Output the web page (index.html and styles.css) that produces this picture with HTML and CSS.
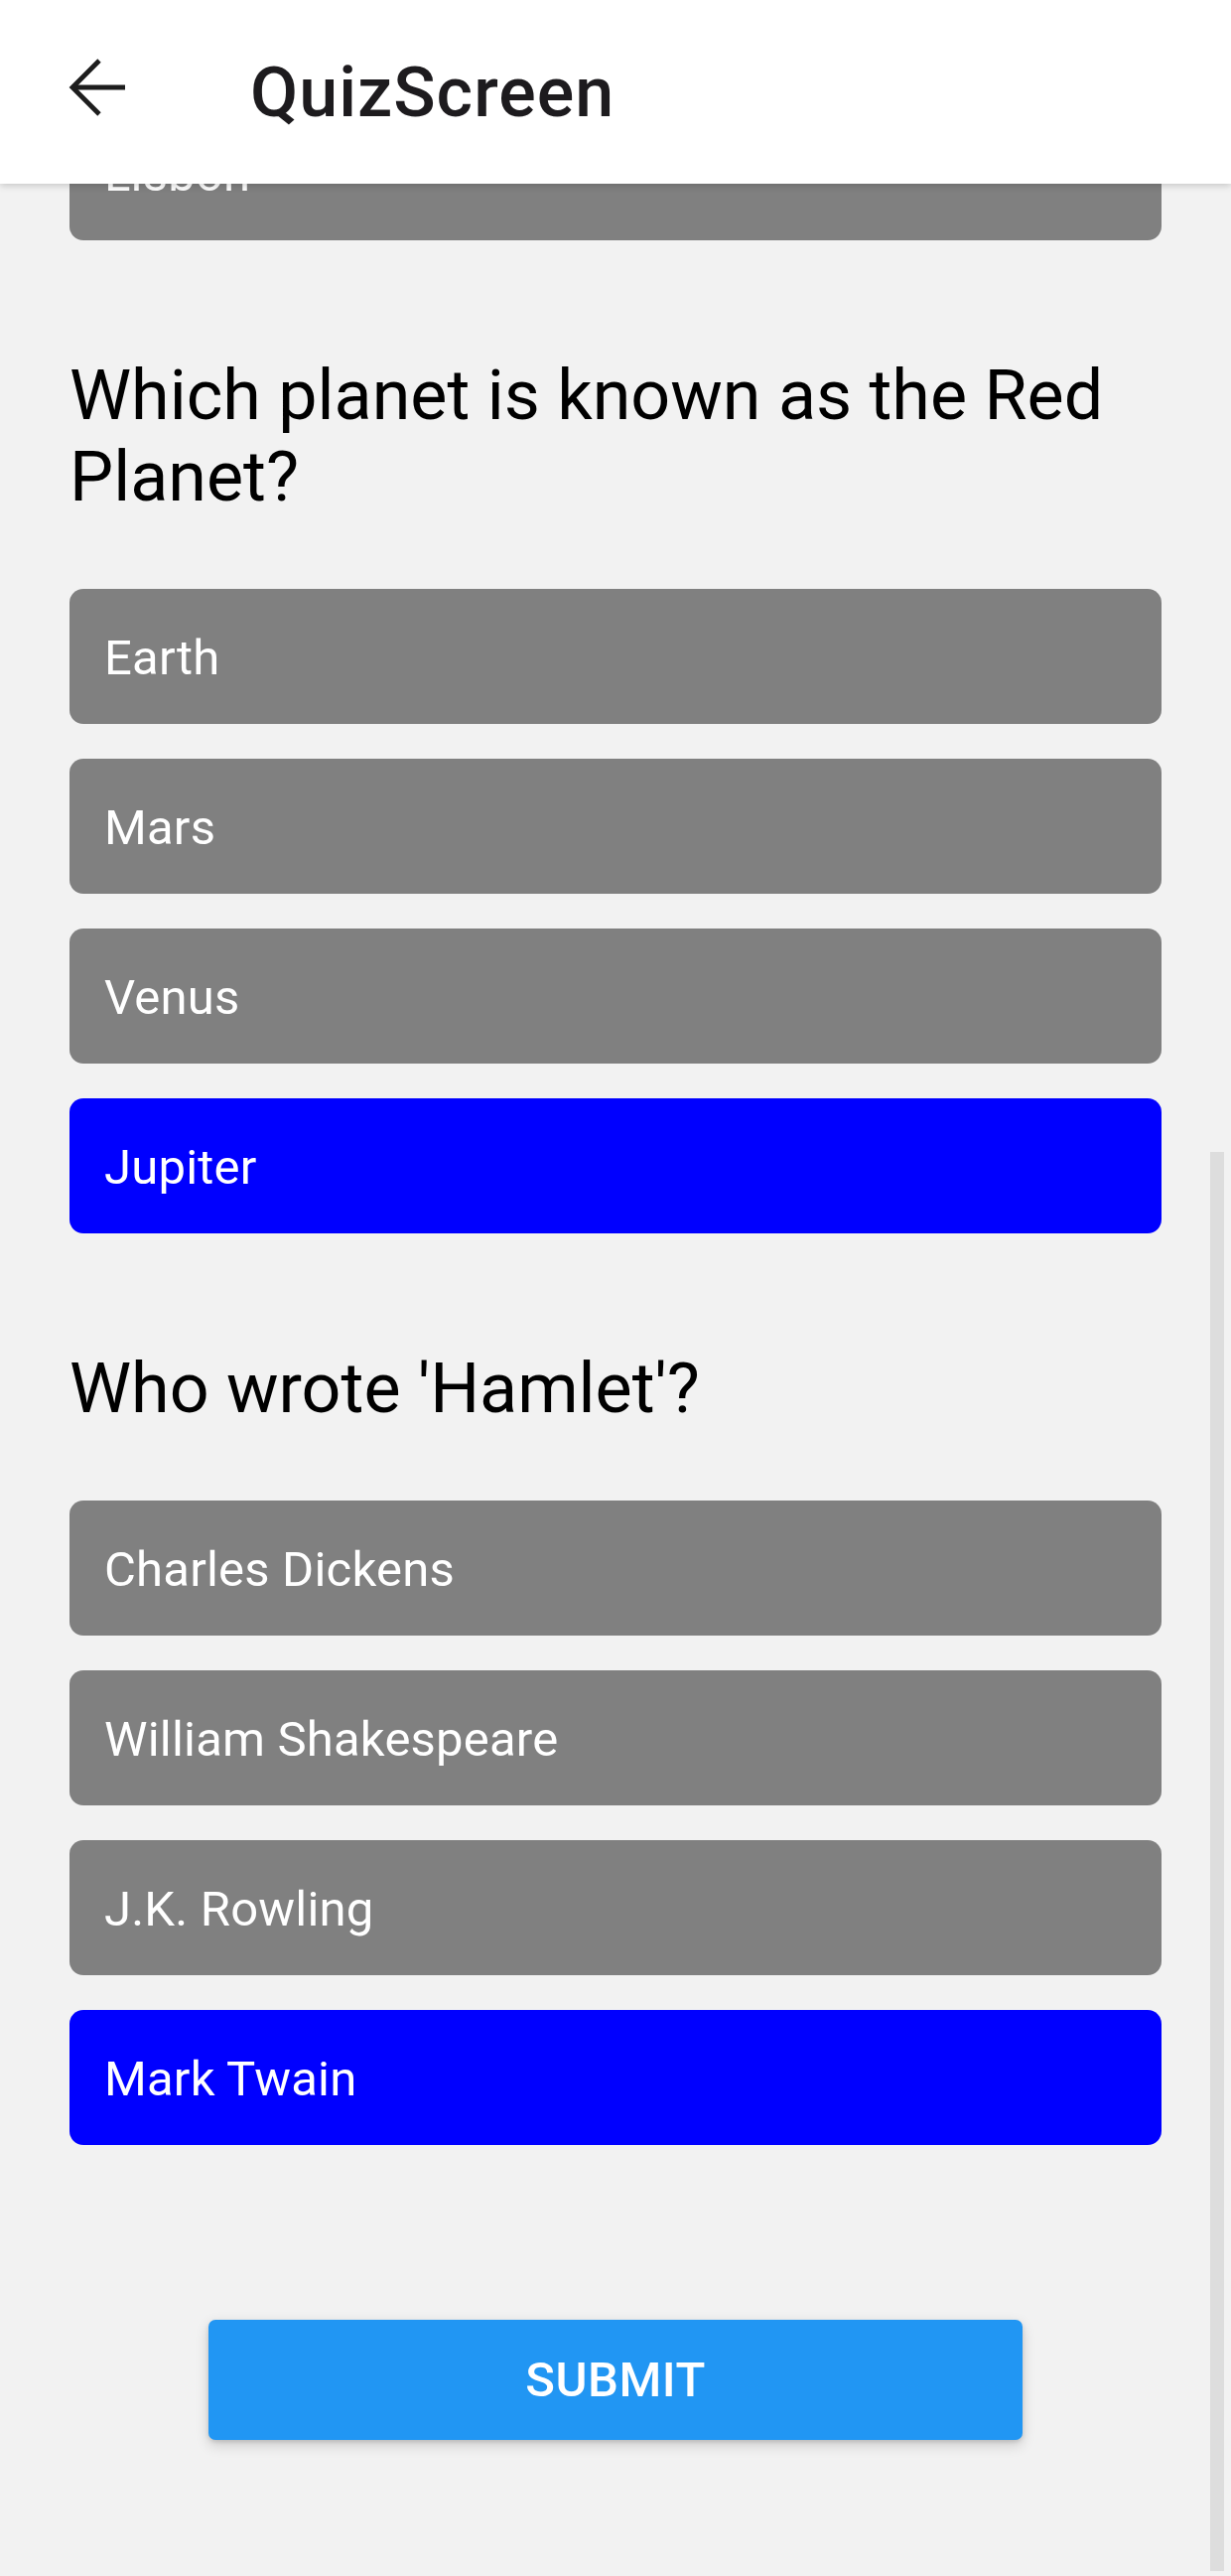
FILE: index.html
```html
<!DOCTYPE html>
<html lang="en">
<head>
<meta charset="utf-8">
<title>QuizScreen</title>
<link rel="stylesheet" href="styles.css">
</head>
<body>
<div class="screen">
  <header class="appbar">
    <svg class="back-icon" width="62" height="60" viewBox="0 0 62 60" aria-hidden="true">
      <polyline points="34,3 7,30 34,57" fill="none" stroke="#1d1d1d" stroke-width="4.8" stroke-linejoin="miter" stroke-linecap="butt"/>
      <line x1="7" y1="30" x2="60" y2="30" stroke="#1d1d1d" stroke-width="4.8"/>
    </svg>
    <h1 class="title">QuizScreen</h1>
  </header>

  <main class="content">
    <section class="quiz-block partial">
      <div class="options">
        <div class="option">Lisbon</div>
      </div>
    </section>

    <section class="quiz-block">
      <h2 class="question">Which planet is known as the Red Planet?</h2>
      <div class="options">
        <div class="option">Earth</div>
        <div class="option">Mars</div>
        <div class="option">Venus</div>
        <div class="option selected">Jupiter</div>
      </div>
    </section>

    <section class="quiz-block">
      <h2 class="question">Who wrote 'Hamlet'?</h2>
      <div class="options">
        <div class="option">Charles Dickens</div>
        <div class="option">William Shakespeare</div>
        <div class="option">J.K. Rowling</div>
        <div class="option selected">Mark Twain</div>
      </div>
    </section>

    <div class="submit-wrap">
      <button class="submit">SUBMIT</button>
    </div>
  </main>

  <div class="scrollbar"></div>
</div>
</body>
</html>
```

FILE: styles.css
```css
html, body {
  margin: 0;
  padding: 0;
}

body {
  background: #f2f2f2;
  font-family: Roboto, "Noto Sans", "Liberation Sans", sans-serif;
  overflow: hidden;
}

.screen {
  position: relative;
  width: 1240px;
  height: 2594px;
  overflow: hidden;
  background: #f2f2f2;
}

.appbar {
  position: relative;
  z-index: 2;
  height: 185px;
  background: #ffffff;
  display: flex;
  align-items: center;
  box-shadow: 0 2px 7px rgba(0, 0, 0, 0.18);
}

.back-icon {
  flex: none;
  align-self: flex-start;
  margin-top: 58px;
  margin-left: 66px;
}

.title {
  margin: 0 0 0 124px;
  font-size: 70px;
  line-height: 82px;
  font-weight: 500;
  letter-spacing: 1px;
  color: #1d1b1e;
}

.content {
  position: relative;
  z-index: 1;
  margin-top: -79px;
  padding: 0 70px;
}

.quiz-block + .quiz-block {
  margin-top: 115px;
}

.question {
  margin: 0 0 72px;
  font-size: 70px;
  line-height: 82px;
  font-weight: 400;
  color: #000000;
}

.options {
  display: flex;
  flex-direction: column;
  gap: 35px;
}

.option {
  height: 136px;
  box-sizing: border-box;
  padding: 3px 0 0 35px;
  display: flex;
  align-items: center;
  background: #808080;
  border-radius: 14px;
  color: #ffffff;
  font-size: 49px;
  line-height: 58px;
  letter-spacing: 0.2px;
}

.option.selected {
  background: #0000ff;
}

.submit-wrap {
  display: flex;
  justify-content: center;
  margin-top: 176px;
}

.submit {
  width: 820px;
  height: 121px;
  border: none;
  border-radius: 7px;
  background: #2196f3;
  color: #ffffff;
  font-family: Roboto, "Noto Sans", "Liberation Sans", sans-serif;
  font-size: 49px;
  font-weight: 500;
  letter-spacing: 0.5px;
  box-shadow: 0 5px 14px rgba(0, 0, 0, 0.16), 0 2px 4px rgba(0, 0, 0, 0.12);
}

.scrollbar {
  position: absolute;
  z-index: 3;
  top: 1160px;
  right: 7px;
  width: 14px;
  height: 1429px;
  background: #dddddd;
}
```
